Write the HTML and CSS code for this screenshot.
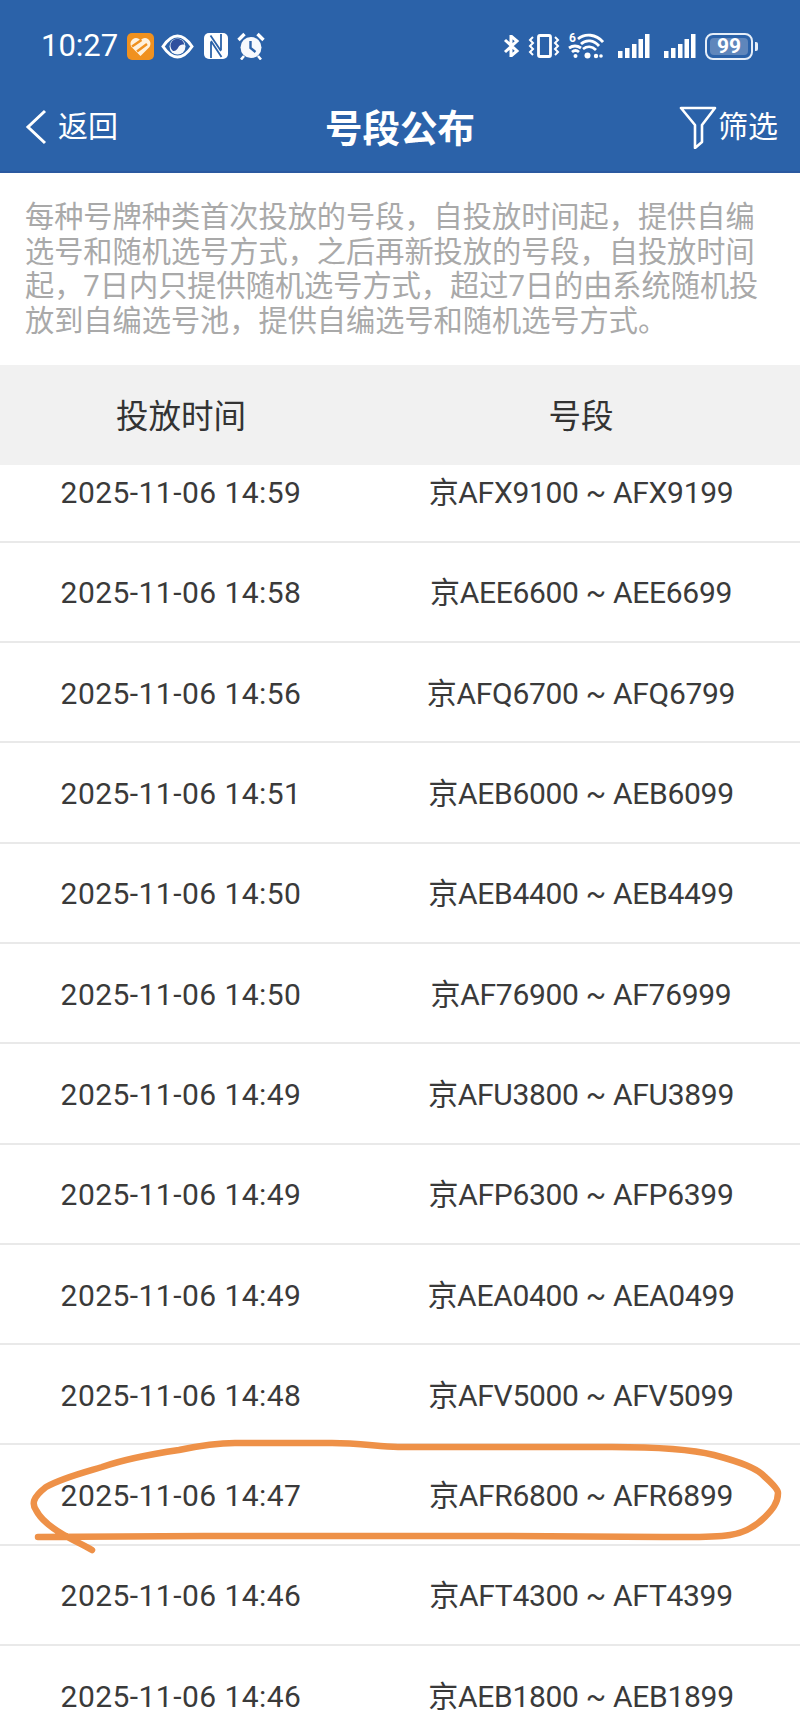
FILE: index.html
```html
<!DOCTYPE html>
<html lang="zh-CN">
<head>
    <meta charset="UTF-8">
    <meta name="viewport" content="width=device-width, initial-scale=1.0">
    <title>号段公布</title>
    <link rel="stylesheet" href="styles.css">
</head>
<body>
    <div class="page">
        <header class="top">
            <div class="status-bar">
                <div class="status-left">
                    <span class="clock">10:27</span>
                    <svg class="app-icon" width="27" height="27" viewBox="0 0 27 27">
                        <rect width="27" height="27" rx="5" fill="#f0911f"/>
                        <path d="M13.500 23L4.500 14C2 10.500 4.500 5 9 5c2 0 3.500 1 4.500 2.500C14.500 6 16 5 18 5c4.500 0 7 5.500 4.500 9z" fill="#fff1dc"/>
                        <path d="M5 13.500L14.500 7M10 18.500L20 11" stroke="#f0911f" stroke-width="2.400"/>
                    </svg>
                    <svg class="eye-icon" width="33" height="25" viewBox="0 0 33 25">
                        <path d="M2 12.500C7 5 11.500 2 16.500 2s9.500 3 14.500 10.500C26 20 21.500 23 16.500 23S7 20 2 12.500z" fill="#2b62a9" stroke="#fff" stroke-width="3"/>
                        <circle cx="16.500" cy="12.500" r="8" fill="#f4f7fc"/>
                        <path d="M9.500 12.500a7 7 0 0 1 14-1.500c-2-1-5 0-6 2s-3 4.500-5.500 4a7 7 0 0 1-2.500-4.500z" fill="#2f4f9e"/>
                    </svg>
                    <svg class="nfc-icon" width="24" height="26" viewBox="0 0 24 26">
                        <rect width="24" height="26" rx="5" fill="#fff"/>
                        <path d="M7 25V9M17 1v16M6.500 2.500L17 18M7 8l10.500 16" fill="none" stroke="#2b62a9" stroke-width="1.800"/>
                    </svg>
                    <svg class="alarm-icon" width="28" height="28" viewBox="0 0 28 28">
                        <circle cx="14" cy="15.500" r="10.500" fill="#f7f9fd"/>
                        <path d="M13.500 9v7l5 4" fill="none" stroke="#2b62a9" stroke-width="2.400"/>
                        <path d="M1.500 8l6-6M26.500 8l-6-6" stroke="#fff" stroke-width="3.400"/>
                        <path d="M7 24l-3 3.500M21 24l3 3.500" stroke="#fff" stroke-width="2.600"/>
                    </svg>
                </div>
                <div class="status-right">
                    <svg class="bt-icon" width="17" height="22" viewBox="0 0 17 22">
                        <path d="M2 5l12 11-6 5V1l6 5L2 17" fill="none" stroke="#fff" stroke-width="3"/>
                    </svg>
                    <svg class="vibrate-icon" width="32" height="24" viewBox="0 0 32 24">
                        <rect x="10.500" y="1.500" width="12" height="21" rx="1.500" fill="none" stroke="#fff" stroke-width="2.800"/>
                        <path d="M5 3L2 6l3 3-3 3 3 3-3 3 3 3M27 3l3 3-3 3 3 3-3 3 3 3-3 3" fill="none" stroke="#fff" stroke-width="2"/>
                    </svg>
                    <div class="wifi">
                        <svg width="36" height="26" viewBox="0 0 36 26">
                            <path d="M10 6C17 0 28 1 35 9M13 11C18 6 26 7 31 13M15 16C19 13 24 13 28 17M1 15Q7 11 13 15M4 19Q7.500 16 11 19" fill="none" stroke="#fff" stroke-width="2.800"/>
                            <circle cx="19.500" cy="22.500" r="3" fill="#fff"/>
                            <circle cx="28" cy="23" r="2.200" fill="#fff"/>
                            <circle cx="33" cy="23" r="1.800" fill="#fff"/>
                            <circle cx="7.500" cy="23" r="2" fill="#fff"/>
                        </svg>
                        <span class="wifi-six">6</span>
                    </div>
                    <svg class="signal-icon" width="33" height="26" viewBox="0 0 33 26">
                        <path d="M1 18h4.500v7H1zM8 15h4.500v10H8zM15 11h4.500v14H15zM21.500 6H26v19h-4.500zM28 1h4.500v24H28z" fill="#fff"/>
                    </svg>
                    <svg class="signal-icon" width="33" height="26" viewBox="0 0 33 26">
                        <path d="M1 18h4.500v7H1zM8 15h4.500v10H8zM15 11h4.500v14H15zM21.500 6H26v19h-4.500zM28 1h4.500v24H28z" fill="#fff"/>
                    </svg>
                    <div class="battery">
                        <span class="battery-body">
                            <span class="battery-level">99</span>
                        </span>
                        <span class="battery-nub"></span>
                    </div>
                </div>
            </div>
            <nav class="nav-bar">
                <div class="back">
                    <svg width="22" height="36" viewBox="0 0 22 36">
                        <path d="M20 2L3 18l17 16" fill="none" stroke="#fff" stroke-width="3"/>
                    </svg>
                    <span>返回</span>
                </div>
                <h1>号段公布</h1>
                <div class="filter">
                    <svg width="38" height="44" viewBox="0 0 38 44">
                        <path d="M2 3h34L23 20v17l-7 6V20z" fill="none" stroke="#fff" stroke-width="2.600" stroke-linejoin="round"/>
                    </svg>
                    <span>筛选</span>
                </div>
            </nav>
        </header>

        <p class="notice">每种号牌种类首次投放的号段，自投放时间起，提供自编选号和随机选号方式，之后再新投放的号段，自投放时间起，7日内只提供随机选号方式，超过7日的由系统随机投放到自编选号池，提供自编选号和随机选号方式。</p>

        <div class="table-head">
            <div>投放时间</div>
            <div>号段</div>
        </div>

        <div class="list">
            <div class="rows">
                <div class="row"><div class="date">2025-11-06 14:59</div><div class="plate">京AFX9100 ~ AFX9199</div></div>
                <div class="row"><div class="date">2025-11-06 14:58</div><div class="plate">京AEE6600 ~ AEE6699</div></div>
                <div class="row"><div class="date">2025-11-06 14:56</div><div class="plate">京AFQ6700 ~ AFQ6799</div></div>
                <div class="row"><div class="date">2025-11-06 14:51</div><div class="plate">京AEB6000 ~ AEB6099</div></div>
                <div class="row"><div class="date">2025-11-06 14:50</div><div class="plate">京AEB4400 ~ AEB4499</div></div>
                <div class="row"><div class="date">2025-11-06 14:50</div><div class="plate">京AF76900 ~ AF76999</div></div>
                <div class="row"><div class="date">2025-11-06 14:49</div><div class="plate">京AFU3800 ~ AFU3899</div></div>
                <div class="row"><div class="date">2025-11-06 14:49</div><div class="plate">京AFP6300 ~ AFP6399</div></div>
                <div class="row"><div class="date">2025-11-06 14:49</div><div class="plate">京AEA0400 ~ AEA0499</div></div>
                <div class="row"><div class="date">2025-11-06 14:48</div><div class="plate">京AFV5000 ~ AFV5099</div></div>
                <div class="row"><div class="date">2025-11-06 14:47</div><div class="plate">京AFR6800 ~ AFR6899</div></div>
                <div class="row"><div class="date">2025-11-06 14:46</div><div class="plate">京AFT4300 ~ AFT4399</div></div>
                <div class="row"><div class="date">2025-11-06 14:46</div><div class="plate">京AEB1800 ~ AEB1899</div></div>
            </div>
        </div>

        <!-- hand drawn mark over the 14:47 row -->
        <svg class="scribble" width="800" height="1726" viewBox="0 0 800 1726">
            <path d="M92 1550C82 1544 72 1540 64 1535C50 1527 40 1518 36 1510C32 1504 32 1498 46 1487C62 1478 82 1473 102 1467C128 1458 152 1454 179 1450C198 1446 215 1443 235 1443H332C360 1443 380 1447 398 1447H612C650 1447 690 1449 714 1455C740 1462 757 1468 765 1477C775 1486 778 1490 778 1493C778 1503 772 1510 765 1517C755 1527 745 1533 730 1535C710 1538 685 1537 663 1537L510 1536H204L38 1537"/>
        </svg>
    </div>
</body>
</html>
```

FILE: styles.css
```css
* {
    box-sizing: border-box;
}
html, body {
    margin: 0;
    padding: 0;
}
body {
    font-family: Roboto, "Noto Sans CJK SC", sans-serif;
    background-color: #fff;
}
.page {
    position: relative;
    width: 800px;
    height: 1726px;
    overflow: hidden;
}

/* blue header */
.top {
    height: 173px;
    background-color: #2b62a9;
    border-bottom: 2px solid #2a59a0;
    color: #fff;
}
.status-bar {
    height: 92px;
    display: flex;
    justify-content: space-between;
    align-items: center;
    padding: 0 42px 0 41px;
}
.status-left, .status-right {
    display: flex;
    align-items: center;
}
.clock {
    font-size: 31px;
    line-height: 36px;
    margin-right: 9px;
}
.eye-icon {
    margin-left: 7px;
}
.nfc-icon {
    margin-left: 10px;
}
.alarm-icon {
    margin-left: 9px;
}
.vibrate-icon {
    margin-left: 8px;
}
.wifi {
    position: relative;
    width: 36px;
    height: 26px;
    margin-left: 8px;
}
.wifi svg {
    display: block;
}
.wifi-six {
    position: absolute;
    left: 1px;
    top: -1px;
    font-size: 12px;
    line-height: 13px;
    font-weight: 700;
}
.signal-icon {
    margin-left: 13px;
}
.battery {
    display: flex;
    align-items: center;
    margin-left: 9px;
}
.battery-body {
    width: 48px;
    height: 27px;
    padding: 3px;
    border: 2.5px solid #e6eef8;
    border-radius: 8px;
    display: flex;
}
.battery-level {
    flex: 1;
    background-color: #5f86bb;
    border-radius: 4px;
    font-size: 21px;
    font-weight: 700;
    line-height: 16px;
    text-align: center;
}
.battery-nub {
    width: 3px;
    height: 9px;
    margin-left: 2px;
    background-color: #e6eef8;
    border-radius: 0 2px 2px 0;
}

.nav-bar {
    position: relative;
    height: 79px;
    display: flex;
    justify-content: space-between;
    align-items: center;
    padding: 0 22px 10px 25px;
}
.nav-bar h1 {
    position: absolute;
    left: 0;
    right: 0;
    top: 15px;
    margin: 0;
    font-size: 37.5px;
    line-height: 44px;
    font-weight: 700;
    text-align: center;
}
.back, .filter {
    display: flex;
    align-items: center;
    font-size: 30px;
    line-height: 36px;
}
.back span {
    margin-left: 11px;
}
.filter span {
    margin-left: 1px;
}

/* intro text */
.notice {
    margin: 0;
    height: 192px;
    padding: 27px 25px 0;
    font-size: 29.2px;
    line-height: 34.7px;
    color: #a9a9a9;
}

.table-head, .row {
    display: grid;
    grid-template-columns: 362px 438px;
    text-align: center;
    align-items: center;
    line-height: 40px;
}
.table-head {
    height: 100px;
    padding-top: 4px;
    background-color: #f1f1f1;
    color: #333;
    font-size: 32.5px;
}

.list {
    height: 1261px;
    overflow: hidden;
}
.rows {
    margin-top: -22.5px;
}
.row {
    height: 100.3px;
    padding-top: 3px;
    border-bottom: 2px solid #e9e9e9;
    color: #3a3a3a;
    font-size: 30px;
}
.date {
    letter-spacing: 0.45px;
}
.plate {
    letter-spacing: -0.3px;
}

.scribble {
    position: absolute;
    left: 0;
    top: 0;
}
.scribble path {
    fill: none;
    stroke: #ee9148;
    stroke-width: 6.5;
    stroke-linecap: round;
    stroke-linejoin: round;
}
```
